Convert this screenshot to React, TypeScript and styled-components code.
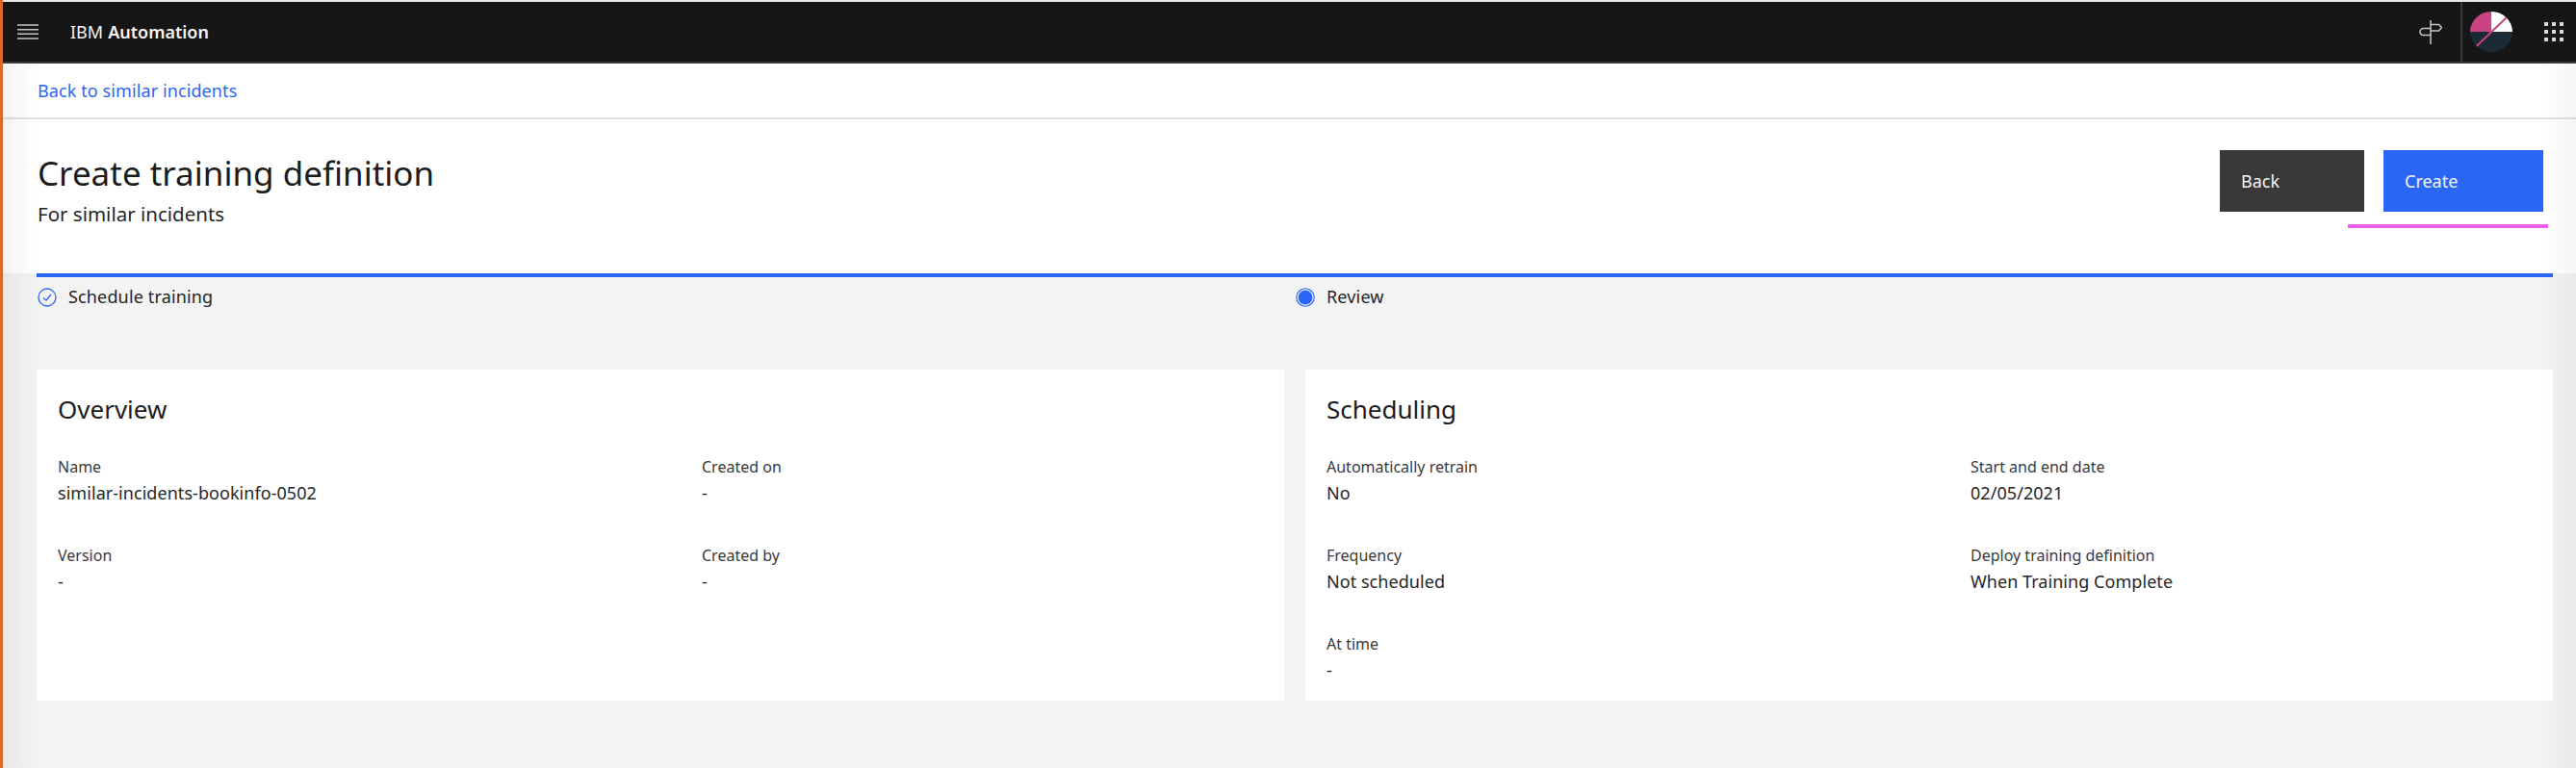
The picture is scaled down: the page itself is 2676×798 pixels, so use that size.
import React from 'react'
import styled, { createGlobalStyle } from 'styled-components'

const Global = createGlobalStyle`
  html, body { margin: 0; padding: 0; background: #f3f3f3; }
  body { font-family: "Noto Sans", "Open Sans", sans-serif; color: #161616; }
  * { box-sizing: border-box; }
`

const Shell = styled.div`
  display: flex;
  height: 798px;
  overflow: hidden;
  position: relative;

  &::after {
    content: '';
    position: absolute;
    inset: 66px 0 0 3px;
    pointer-events: none;
    background:
      linear-gradient(to right, rgba(0, 0, 0, 0.05), rgba(0, 0, 0, 0) 36px),
      linear-gradient(to left, rgba(0, 0, 0, 0.04), rgba(0, 0, 0, 0) 36px);
  }
`
const EdgeStrip = styled.div`
  width: 3px;
  flex: none;
  background: #d9692c;
`
const Main = styled.div`
  flex: 1;
  min-width: 0;
  display: flex;
  flex-direction: column;
`
const TopBar = styled.header`
  height: 66px;
  display: flex;
  align-items: stretch;
  background: #161616;
  border-top: 2px solid #e6e6ea;
  border-bottom: 2px solid #393939;
  color: #f4f4f4;
`
const MenuButton = styled.div`
  width: 70px;
  display: flex;
  align-items: center;
  padding-left: 15px;
`
const Brand = styled.div`
  display: flex;
  align-items: center;
  font-size: 18px;
  gap: 5px;
  b { font-weight: 600; }
`
const TopActions = styled.div`
  margin-left: auto;
  display: flex;
  align-items: stretch;
`
const SignCell = styled.div`
  width: 60px;
  display: flex;
  align-items: center;
  justify-content: flex-end;
  padding-right: 19px;
  border-right: 2px solid #393939;
`
const AvatarCell = styled.div`
  width: 60px;
  display: flex;
  align-items: center;
  justify-content: center;
`
const DotsCell = styled.div`
  width: 58px;
  display: flex;
  align-items: center;
  justify-content: flex-end;
  padding-right: 13px;
`
const Breadcrumb = styled.nav`
  height: 58px;
  display: flex;
  align-items: center;
  padding-left: 36px;
  background: #fff;
  border-bottom: 2px solid #e0e0e0;
`
const BackLink = styled.a`
  color: #2d66f0;
  font-size: 18px;
  letter-spacing: 0.1px;
  text-decoration: none;
`
const PageHeader = styled.section`
  height: 160px;
  flex: none;
  display: flex;
  justify-content: space-between;
  padding: 32px 34px 0 36px;
  background: #fff;
  position: relative;
`
const HeadingBlock = styled.div`
  padding-top: 1px;
`
const Title = styled.h1`
  margin: 0;
  font-size: 35px;
  font-weight: 400;
  line-height: 46px;
  color: #1c1c1c;
`
const Subtitle = styled.p`
  margin: 6px 0 0;
  font-size: 20.5px;
  line-height: 26px;
  color: #262626;
`
const ButtonRow = styled.div`
  display: flex;
  gap: 20px;
  align-items: flex-start;
`
const Button = styled.button<{ $primary?: boolean; $w: number }>`
  width: ${p => p.$w}px;
  height: 64px;
  border: 0;
  padding: 0 0 0 22px;
  text-align: left;
  font: inherit;
  font-size: 18px;
  color: #f4f4f4;
  background: ${p => (p.$primary ? '#2a66f6' : '#393939')};
`
const Annotation = styled.div`
  position: absolute;
  left: 2436px;
  top: 109px;
  width: 208px;
  height: 4px;
  background: #ee5ef0;
`
const Steps = styled.div`
  margin: 0 24px 0 35px;
  height: 100px;
  flex: none;
  border-top: 4px solid #2a66f6;
  display: grid;
  grid-template-columns: 1fr 1fr;
  padding-top: 7px;
`
const Step = styled.div`
  display: flex;
  align-items: flex-start;
  gap: 12px;
  font-size: 18px;
  line-height: 26px;
  letter-spacing: 0.15px;
  color: #262626;
`
const StepIcon = styled.svg`
  width: 20px;
  height: 20px;
  margin-top: 4px;
  margin-left: 1px;
  flex: none;
`
const CardGrid = styled.div`
  margin: 0 24px 0 35px;
  display: grid;
  grid-template-columns: 1fr 1fr;
  gap: 22px;
`
const Card = styled.article`
  height: 344px;
  background: #fff;
  padding: 24px 22px 0;
`
const CardTitle = styled.h2`
  margin: 0 0 31px;
  font-size: 26px;
  font-weight: 400;
  line-height: 34px;
  color: #1c1c1c;
`
const Fields = styled.div`
  display: grid;
  grid-template-columns: 669px 1fr;
  grid-auto-rows: 92px;
`
const Field = styled.div`
  display: flex;
  flex-direction: column;
`
const FieldLabel = styled.span`
  font-size: 16px;
  line-height: 24px;
  color: #393939;
`
const FieldValue = styled.span`
  margin-top: 2px;
  font-size: 18px;
  line-height: 26px;
  letter-spacing: 0.05px;
  color: #262626;
`

const overview = [
  ['Name', 'similar-incidents-bookinfo-0502'],
  ['Created on', '-'],
  ['Version', '-'],
  ['Created by', '-'],
]
const scheduling = [
  ['Automatically retrain', 'No'],
  ['Start and end date', '02/05/2021'],
  ['Frequency', 'Not scheduled'],
  ['Deploy training definition', 'When Training Complete'],
  ['At time', '-'],
]

const FieldList = ({ rows }: { rows: string[][] }) => (
  <Fields>
    {rows.map(([label, value]) => (
      <Field key={label}>
        <FieldLabel>{label}</FieldLabel>
        <FieldValue>{value}</FieldValue>
      </Field>
    ))}
  </Fields>
)

const Avatar = () => (
  <svg width="44" height="42" viewBox="0 0 44 42">
    <defs>
      <clipPath id="disc"><ellipse cx="22" cy="21" rx="22" ry="21" /></clipPath>
    </defs>
    <g clipPath="url(#disc)">
      <rect x="0" y="21" width="44" height="21" fill="#1c2a35" />
      <rect x="0" y="0" width="22" height="21" fill="#c94282" />
      <rect x="22" y="0" width="22" height="21" fill="#fff" />
      <path d="M6.7 36 L38 6" stroke="#c94282" strokeWidth="2" />
    </g>
  </svg>
)

const Dots = () => (
  <svg width="20" height="20" viewBox="0 0 20 20" fill="#d8d8d8">
    {[0, 8, 16].map(y =>
      [0, 8, 16].map(x => <rect key={`${x}-${y}`} x={x} y={y} width="4" height="4" />),
    )}
  </svg>
)

export default function App() {
  return (
    <>
      <Global />
      <Shell>
        <EdgeStrip />
        <Main>
          <TopBar>
            <MenuButton>
              <svg width="22" height="16" viewBox="0 0 22 16" stroke="#c6c6c6" strokeWidth="1.5">
                <path d="M0 1h22M0 5.67h22M0 10.33h22M0 15h22" />
              </svg>
            </MenuButton>
            <Brand>IBM <b>Automation</b></Brand>
            <TopActions>
              <SignCell>
                <svg width="24" height="25" viewBox="0 0 24 25" fill="none" stroke="#c6c6c6" strokeWidth="1.5">
                  <path d="M12 0v25" />
                  <path d="M12 4.5h8.5l3 3-3 3.5H12" />
                  <path d="M12 8.5H4.5a3.5 3.5 0 0 0 0 7H12" />
                </svg>
              </SignCell>
              <AvatarCell><Avatar /></AvatarCell>
              <DotsCell><Dots /></DotsCell>
            </TopActions>
          </TopBar>
          <Breadcrumb><BackLink href="#">Back to similar incidents</BackLink></Breadcrumb>
          <PageHeader>
            <HeadingBlock>
              <Title>Create training definition</Title>
              <Subtitle>For similar incidents</Subtitle>
            </HeadingBlock>
            <ButtonRow>
              <Button $w={150}>Back</Button>
              <Button $primary $w={166}>Create</Button>
            </ButtonRow>
            <Annotation />
          </PageHeader>
          <Steps>
            <Step>
              <StepIcon viewBox="0 0 20 20" fill="none" stroke="#2a66f6" strokeWidth="1.3">
                <circle cx="10" cy="10" r="9" />
                <path d="M6 10.5l3 2.5 5-6" />
              </StepIcon>
              Schedule training
            </Step>
            <Step>
              <StepIcon viewBox="0 0 20 20" fill="#2a66f6">
                <circle cx="10" cy="10" r="9.2" fill="none" stroke="#2a66f6" strokeWidth="1.1" />
                <circle cx="10" cy="10" r="7.4" />
              </StepIcon>
              Review
            </Step>
          </Steps>
          <CardGrid>
            <Card>
              <CardTitle>Overview</CardTitle>
              <FieldList rows={overview} />
            </Card>
            <Card>
              <CardTitle>Scheduling</CardTitle>
              <FieldList rows={scheduling} />
            </Card>
          </CardGrid>
        </Main>
      </Shell>
    </>
  )
}
